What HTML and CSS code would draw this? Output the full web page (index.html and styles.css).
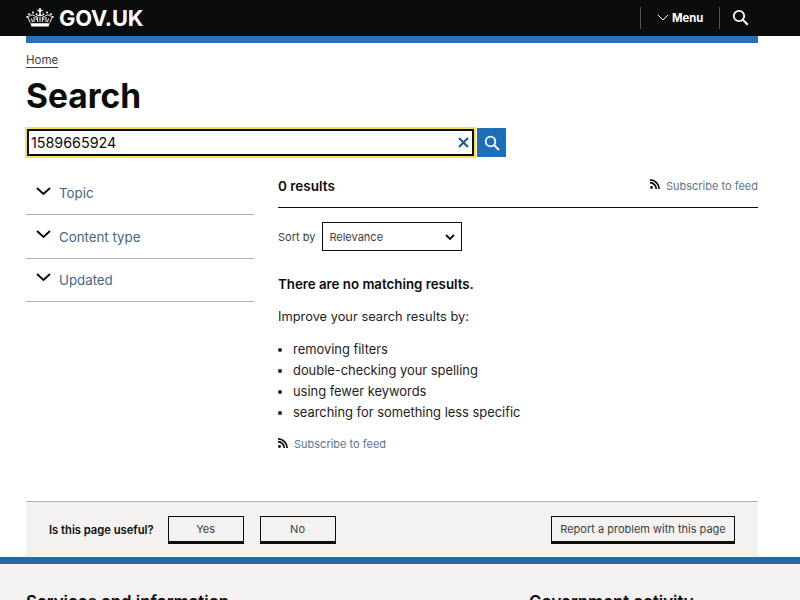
FILE: index.html
```
<!DOCTYPE html>
<html lang="en">
<head>
<meta charset="utf-8">
<title>Search - GOV.UK</title>
<link rel="stylesheet" href="styles.css">
</head>
<body>
<header class="masthead">
  <div class="masthead-inner">
    <a class="logo" href="#">
      <svg class="crown" width="28" height="19" viewBox="0 0 28 19" aria-hidden="true">
        <g fill="#fff">
          <rect x="13.2" y="0" width="1.6" height="7"/><rect x="11.4" y="1.8" width="5.2" height="1.5"/>
          <circle cx="3" cy="6.2" r="1"/><circle cx="7" cy="4.6" r="1"/><circle cx="10.6" cy="6.2" r="1"/><circle cx="17.4" cy="6.2" r="1"/><circle cx="21" cy="4.6" r="1"/><circle cx="25" cy="6.2" r="1"/>
          <circle cx="1.2" cy="9" r="1"/><circle cx="26.8" cy="9" r="1"/>
          <path d="M4.4 15.2h19.2l-1 3.3H5.4z"/>
        </g>
        <g fill="none" stroke="#fff" stroke-width="1">
          <path d="M4.2 14.6 2 9.5c1.4-2.4 4-3.3 6.2-2 1.6 1 2.2 2.6 2 4.4M23.8 14.6 26 9.5c-1.4-2.4-4-3.3-6.2-2-1.6 1-2.2 2.6-2 4.4M10.2 8.5c1.4-1.5 6.2-1.5 7.6 0"/>
          <path d="M8 9v5M11.6 9v5M14 8.5v5.500M16.400 9v5M20 9v5M5.500 10.500l1 3.500M22.500 10.500l-1 3.500"/>
        </g>
      </svg>
      <span class="logo-text">GOV.UK</span>
    </a>
    <nav class="masthead-nav">
      <button class="menu-toggle" type="button">
        <svg width="12" height="7" viewBox="0 0 12 7" aria-hidden="true"><path d="M.8.8 6 6 11.200.8" fill="none" stroke="#fff" stroke-width="1"/></svg>
        <span>Menu</span>
      </button>
      <button class="search-toggle" type="button" aria-label="Search">
        <svg width="17" height="17" viewBox="0 0 17 17" aria-hidden="true"><circle cx="7" cy="7" r="5.200" fill="none" stroke="#fff" stroke-width="1.800"/><path d="M10.800 10.800 15.800 15.800" stroke="#fff" stroke-width="2"/></svg>
      </button>
    </nav>
  </div>
</header>

<div class="container">
  <div class="blue-bar"></div>
  <a class="breadcrumb" href="#">Home</a>
  <h1 class="title">Search</h1>

  <form class="search-row">
    <div class="search-input">
      <span class="search-value">1589665924</span>
      <svg class="clear" width="11" height="11" viewBox="0 0 11 11" aria-hidden="true"><path d="M1 1 10 10M10 1 1 10" stroke="#2b5b8c" stroke-width="2.200"/></svg>
    </div>
    <button class="search-submit" type="button" aria-label="Search">
      <svg width="16" height="16" viewBox="0 0 16 16" aria-hidden="true"><circle cx="6.500" cy="6.500" r="4.800" fill="none" stroke="#fff" stroke-width="1.800"/><path d="M10 10 15 15" stroke="#fff" stroke-width="2"/></svg>
    </button>
  </form>

  <div class="columns">
    <aside class="filters">
      <div class="filter"><svg class="chev" width="15" height="9" viewBox="0 0 15 9" aria-hidden="true"><path d="M1 1 7.500 7 14 1" fill="none" stroke="#0b0c0c" stroke-width="2"/></svg><span>Topic</span></div>
      <div class="filter"><svg class="chev" width="15" height="9" viewBox="0 0 15 9" aria-hidden="true"><path d="M1 1 7.500 7 14 1" fill="none" stroke="#0b0c0c" stroke-width="2"/></svg><span>Content type</span></div>
      <div class="filter"><svg class="chev" width="15" height="9" viewBox="0 0 15 9" aria-hidden="true"><path d="M1 1 7.500 7 14 1" fill="none" stroke="#0b0c0c" stroke-width="2"/></svg><span>Updated</span></div>
    </aside>

    <main class="results">
      <div class="results-head">
        <strong class="count">0 results</strong>
        <a class="feed" href="#">
          <svg class="rss" width="10" height="10" viewBox="0 0 10 10" aria-hidden="true"><circle cx="1.500" cy="8.500" r="1.400" fill="#0b0c0c"/><path d="M0 3.700A6.300 6.300 0 0 1 6.300 10M0 .9A9.100 9.100 0 0 1 9.100 10" fill="none" stroke="#0b0c0c" stroke-width="1.700"/></svg>
          Subscribe to feed
        </a>
      </div>
      <div class="sort-row">
        <span class="sort-label">Sort by</span>
        <div class="select">
          <span>Relevance</span>
          <svg width="10" height="6" viewBox="0 0 10 6" aria-hidden="true"><path d="M1 1 5 5 9 1" fill="none" stroke="#0b0c0c" stroke-width="1.800"/></svg>
        </div>
      </div>
      <p class="no-match">There are no matching results.</p>
      <p class="improve">Improve your search results by:</p>
      <ul class="tips">
        <li>removing filters</li>
        <li>double-checking your spelling</li>
        <li>using fewer keywords</li>
        <li>searching for something less specific</li>
      </ul>
      <a class="feed feed-bottom" href="#">
        <svg class="rss" width="10" height="10" viewBox="0 0 10 10" aria-hidden="true"><circle cx="1.500" cy="8.500" r="1.400" fill="#0b0c0c"/><path d="M0 3.700A6.300 6.300 0 0 1 6.300 10M0 .9A9.100 9.100 0 0 1 9.100 10" fill="none" stroke="#0b0c0c" stroke-width="1.700"/></svg>
        Subscribe to feed
      </a>
    </main>
  </div>

  <section class="feedback">
    <strong class="feedback-q">Is this page useful?</strong>
    <button class="fb-btn fb-answer" type="button">Yes</button>
    <button class="fb-btn fb-answer" type="button">No</button>
    <button class="fb-btn fb-report" type="button">Report a problem with this page</button>
  </section>
</div>

<footer class="footer">
  <div class="footer-inner">
    <h2 class="footer-h">Services and information</h2>
    <h2 class="footer-h footer-h2">Government activity</h2>
  </div>
</footer>
</body>
</html>
```
FILE: styles.css
```
* { box-sizing: border-box; }
html, body { margin: 0; padding: 0; }
body { font-family: "Inter", "Liberation Sans", sans-serif; color: #0b0c0c; background: #fff; }
a { text-decoration: none; }
button { font-family: inherit; }

.masthead { background: #0b0c0c; height: 36px; }
.masthead-inner { width: 732px; margin-left: 26px; height: 36px; display: flex; align-items: center; justify-content: space-between; }
.logo { display: flex; align-items: center; gap: 5px; color: #fff; }
.crown { display: block; margin-top: -1px; }
.logo-text { font-size: 21.800px; font-weight: 700; letter-spacing: -0.2px; line-height: 36px; }
.masthead-nav { display: flex; align-items: center; height: 22px; margin-top: -1px; }
.menu-toggle { height: 22px; width: 80px; background: none; color: #fff; border: 0; border-left: 1px solid #555; border-right: 1px solid #555; display: flex; align-items: center; gap: 3px; padding: 0 0 0 16px; font-size: 11.300px; font-weight: 700; }
.search-toggle { background: none; border: 0; width: 38px; height: 22px; display: flex; align-items: center; justify-content: flex-start; padding: 0 0 0 12px; }

.container { width: 732px; margin-left: 26px; }
.blue-bar { height: 7px; background: #2a6fb8; }
.breadcrumb { display: inline-block; margin-top: 10px; font-size: 11.500px; line-height: 15px; color: #383f43; border-bottom: 1px solid #383f43; height: 15px; }
.title { margin: 6px 0 0; font-size: 33.500px; font-weight: 700; line-height: 44px; }

.search-row { display: flex; align-items: flex-start; margin-top: 10px; height: 30px; }
.search-input { width: 447px; height: 27px; margin: 1px 3px 0 1px; border: 2px solid #0b0c0c; outline: 2px solid #fbdf4f; display: flex; align-items: center; justify-content: space-between; padding: 0 3px 0 2px; }
.search-value { font-size: 14.300px; }
.clear { display: block; }
.search-submit { width: 29px; height: 29px; background: #1d70b8; border: 0; padding: 0; display: flex; align-items: center; justify-content: center; }

.columns { display: flex; margin-top: 14px; }
.filters { width: 228px; flex: none; }
.filter { height: 43.400px; border-bottom: 1px solid #b1b4b6; display: flex; align-items: center; gap: 8px; padding-left: 10px; font-size: 13.300px; color: #46658a; }
.chev { display: block; margin-top: -4px; }
.results { margin-left: 24px; width: 480px; }
.results-head { height: 36px; padding-bottom: 8px; border-bottom: 1px solid #0b0c0c; display: flex; align-items: center; justify-content: space-between; }
.count { font-size: 13.500px; font-weight: 600; }
.feed { font-size: 11px; color: #5a7490; display: flex; align-items: center; gap: 6px; }
.rss { display: block; margin-top: -3px; }
.sort-row { display: flex; align-items: center; gap: 7px; margin-top: 14px; }
.sort-label { font-size: 11px; color: #383f43; }
.select { width: 140px; height: 29px; border: 1px solid #0b0c0c; display: flex; align-items: center; justify-content: space-between; padding: 0 6px; font-size: 11px; color: #383f43; }
.no-match { margin: 23px 0 0; font-size: 13.300px; font-weight: 600; line-height: 20px; }
.improve { margin: 13px 0 0; font-size: 12.850px; line-height: 20px; color: #1d2325; }
.tips { margin: 12px 0 0; padding: 0 0 0 15px; font-size: 12.900px; line-height: 21px; color: #1d2325; }
.feed-bottom { margin-top: 14px; }

.feedback { margin-top: 50px; height: 56px; background: #f3f2f1; border-top: 1px solid #b1b4b6; display: flex; align-items: center; padding: 0 23px; }
.feedback-q { font-size: 11.200px; font-weight: 600; margin-right: 14px; }
.fb-btn { height: 28px; margin-top: 1px; background: #f3f2f1; border: 1px solid #0b0c0c; border-bottom-width: 3px; font-size: 11px; color: #383f43; padding: 0; }
.fb-answer { width: 76px; margin-right: 16px; }
.fb-report { width: 184px; margin-left: auto; }

.footer { border-top: 7px solid #2469a9; background: #f3f2f1; height: 200px; }
.footer-inner { width: 732px; margin-left: 26px; display: flex; padding-top: 28px; }
.footer-h { margin: 0; font-size: 16.800px; font-weight: 600; line-height: 20px; width: 503px; }
.footer-h2 { width: auto; }
```
